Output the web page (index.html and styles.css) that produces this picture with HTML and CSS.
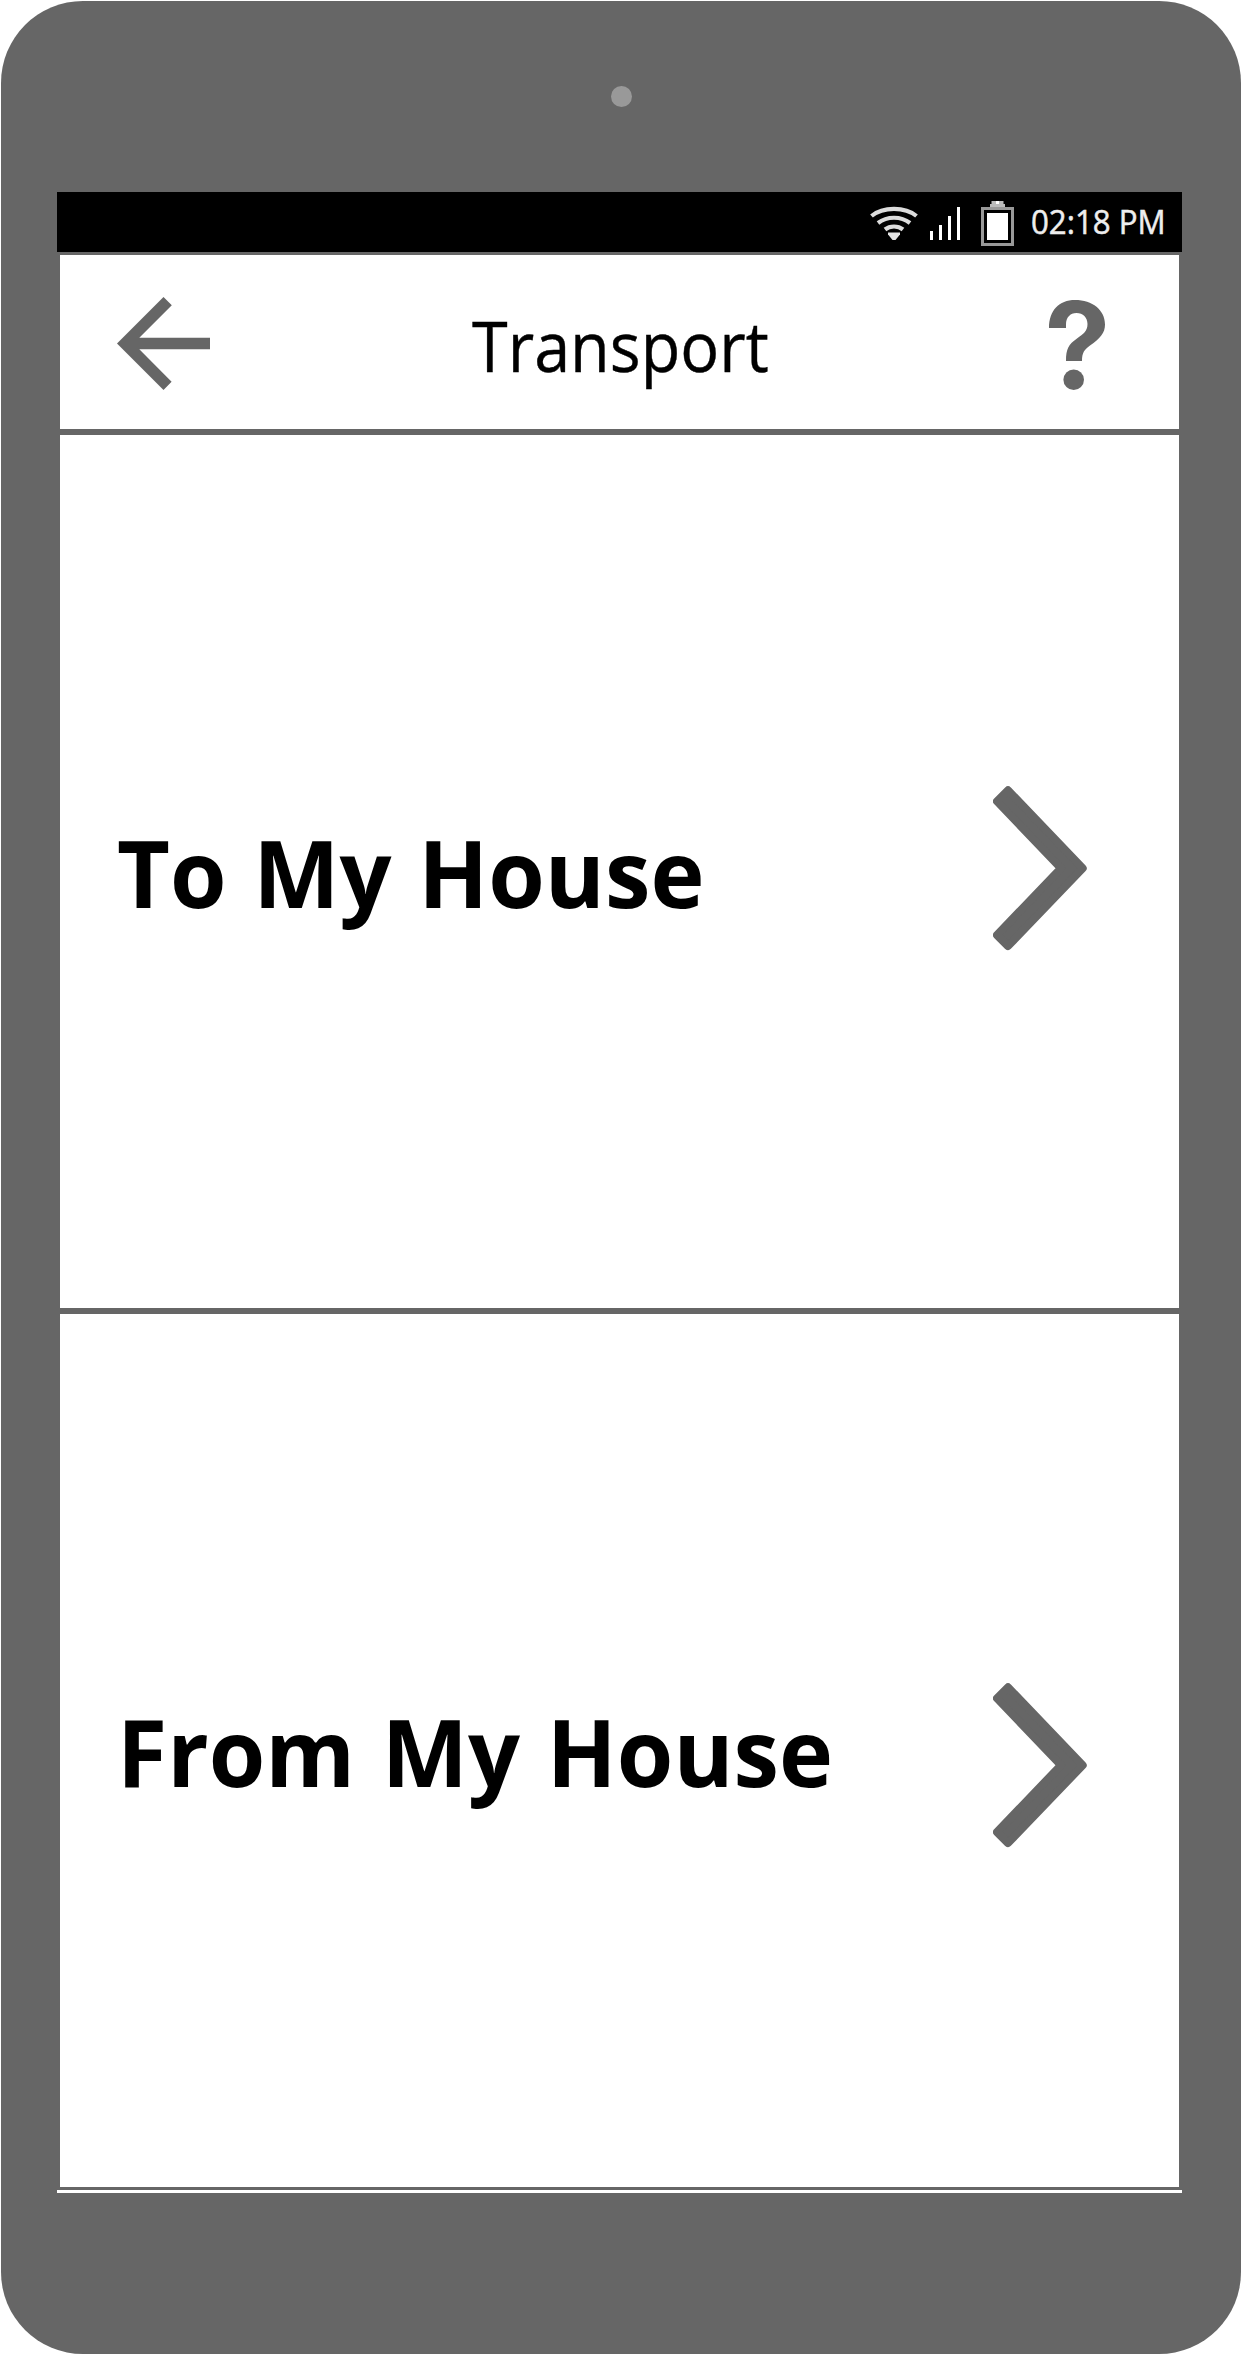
FILE: index.html
```html
<!DOCTYPE html>
<html lang="en">
<head>
<meta charset="utf-8">
<title>Transport</title>
<link rel="stylesheet" href="styles.css">
</head>
<body>
<div class="device">
  <div class="bezel"><span class="camera"></span></div>
  <div class="status">
    <svg class="wifi" width="48" height="36" viewBox="0 0 48 36" fill="none" stroke="#dcdcdc" stroke-width="4.2">
      <path d="M1.500 12C13 2.500 35 2.500 46.500 12M8 19C17 12 31 12 40 19M15 25.500C20 21.500 28 21.500 33 25.500"/>
      <path d="M18 28.500h12v2l-4.500 5.500h-3L18 30.500z" fill="#e4e4e4" stroke="none"/>
    </svg>
    <svg class="signal" width="30" height="33" viewBox="0 0 30 33" fill="#fff">
      <path d="M0 24h3v9H0zM9 18h3v15H9zM18 9h3v24h-3zM27 0h3v33h-3z"/>
    </svg>
    <svg class="battery" width="33" height="45" viewBox="0 0 33 45">
      <path d="M10.500 0h12v3H24v3H9V3h1.500z" fill="#bbb"/><path d="M15 0h3v3h-3z" fill="#fff"/>
      <path d="M1.500 7.500h30v36h-30z" fill="none" stroke="#999" stroke-width="3"/>
      <path d="M6 12h21v27H6z" fill="#fff"/>
    </svg>
    <time class="time">02:18 PM</time>
  </div>
  <main class="screen">
    <header class="header">
      <svg class="back" width="93" height="93" viewBox="0 0 93 93" fill="#666">
        <path d="M0 46.500L46.500 0l8.300 8.200L22.300 40.700H93v11.600H22.300l32.300 32.500-8.100 8.200z"/>
      </svg>
      <h1 class="title">Transport</h1>
      <svg class="help" width="56" height="90" viewBox="0 0 56 90" fill="#666">
        <path d="M0 28C0 10.500 10 0 26 0 43.500 0 56 10 56 24.500 56 33 51 38.500 41 45.500 35.500 49.500 33 52.500 33 61H17C17 49 19.500 44.500 28 38.500 34.500 34 38.500 31 38.500 24 38.500 17.500 34 13 27.500 13 21 13 17 17.500 17 24.500V28z"/>
        <circle cx="24.700" cy="79.700" r="10.300"/>
      </svg>
    </header>
    <section class="option to">
      <h2 class="label">To My House</h2>
      <svg class="chevron" width="94" height="165" viewBox="0 0 94 165"><path d="M15 4.300L89.700 82.200 15 160.100 4 149.100 68 82.200 4 15.300z"/></svg>
    </section>
    <section class="option from">
      <h2 class="label">From My House</h2>
      <svg class="chevron" width="94" height="165" viewBox="0 0 94 165"><path d="M15 4.300L89.700 82.200 15 160.100 4 149.100 68 82.200 4 15.300z"/></svg>
    </section>
  </main>
</div>
</body>
</html>
```
FILE: styles.css
```css
* { box-sizing: border-box; }
body { margin: 0; background: #fff; font-family: "Open Sans", "Noto Sans", sans-serif; color: #000; }
.device { width: 1240px; height: 2353px; margin: 1px; padding: 0 59px 0 56px; background: #666; border-radius: 82px; }
.bezel { height: 191px; display: flex; justify-content: center; padding: 85px 0 0 3px; }
.camera { width: 21px; height: 21px; border-radius: 50%; background: #999; }
.status { height: 60px; background: #000; display: flex; align-items: flex-start; padding-left: 813px; }
.status svg { flex: none; }
.wifi { margin-top: 12px; }
.signal { margin: 15px 0 0 12px; }
.battery { margin: 9px 0 0 21px; }
.time { margin-left: 17px; font-size: 33px; line-height: 60px; font-weight: 500; -webkit-text-stroke: .5px #eee; color: #eee; white-space: nowrap; transform: scaleX(.947); transform-origin: left; }
.screen { height: 1941px; border-top: 3px solid #666; border-bottom: 3px solid #fff; display: flex; flex-direction: column; background: #666; }
.header, .option { margin: 0 3px; background: #fff; display: flex; }
.header { height: 174px; justify-content: space-between; padding: 42px 74px 0 57px; }
.title { margin: 1px 0 0 5px; font-size: 70px; line-height: 95px; font-weight: 400; -webkit-text-stroke: .4px #000; transform: scaleX(.925); transform-origin: left; }
.help { margin-top: 3px; }
.option { height: 873px; margin-top: 6px; justify-content: space-between; padding: 0 92px 0 57px; }
.label { margin: 372px 0 0; font-size: 94px; line-height: 130px; font-weight: 700; white-space: nowrap; word-spacing: 3px; transform: scaleX(.973); transform-origin: left; }
.chevron { margin-top: 351px; fill: #666; stroke: #666; stroke-width: 8; stroke-linejoin: round; }
.from .chevron { margin-top: 369px; }
```
